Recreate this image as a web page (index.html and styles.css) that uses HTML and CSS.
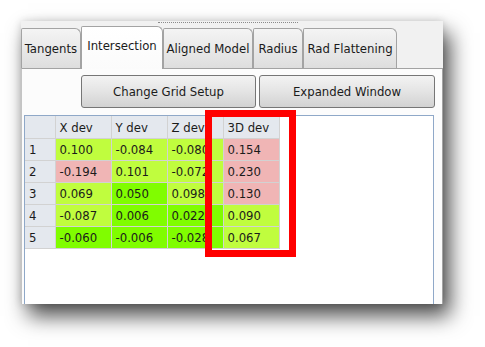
FILE: index.html
```html
<!DOCTYPE html>
<html lang="en">
<head>
  <meta charset="UTF-8">
  <title>Intersection deviations</title>
  <link rel="stylesheet" href="styles.css">
</head>
<body>
  <div class="window">
    <div class="topstrip"><div class="dots"></div></div>

    <div class="tabs">
      <div class="tab w-tangents">Tangents</div>
      <div class="tab w-intersection active">Intersection</div>
      <div class="tab w-aligned">Aligned Model</div>
      <div class="tab w-radius">Radius</div>
      <div class="tab w-flat">Rad Flattening</div>
    </div>

    <div class="pane">
      <div class="buttons">
        <button class="btn">Change Grid Setup</button>
        <button class="btn">Expanded Window</button>
      </div>

      <div class="grid-box">
        <table class="grid">
          <colgroup>
            <col class="c-head">
            <col class="c-data"><col class="c-data"><col class="c-data"><col class="c-data">
          </colgroup>
          <thead>
            <tr><th></th><th>X dev</th><th>Y dev</th><th>Z dev</th><th>3D dev</th></tr>
          </thead>
          <tbody>
            <tr><th>1</th><td class="lime">0.100</td><td class="lime">-0.084</td><td class="lime">-0.080</td><td class="pink">0.154</td></tr>
            <tr><th>2</th><td class="pink">-0.194</td><td class="lime">0.101</td><td class="lime">-0.072</td><td class="pink">0.230</td></tr>
            <tr><th>3</th><td class="lime">0.069</td><td class="green">0.050</td><td class="lime">0.098</td><td class="pink">0.130</td></tr>
            <tr><th>4</th><td class="lime">-0.087</td><td class="green">0.006</td><td class="green">0.022</td><td class="lime">0.090</td></tr>
            <tr><th>5</th><td class="green">-0.060</td><td class="green">-0.006</td><td class="green">-0.028</td><td class="lime">0.067</td></tr>
          </tbody>
        </table>
      </div>

      <div class="highlight"></div>
    </div>
  </div>
</body>
</html>
```

FILE: styles.css
```css
html, body {
  margin: 0;
  background: #ffffff;
}

body {
  box-sizing: border-box;
  min-height: 347px;
  padding: 21px 0 0 21px;
  font-family: "DejaVu Sans Condensed", "Liberation Sans", Arial, sans-serif;
  font-size: 13px;
  color: #1b1b1b;
}

.window {
  width: 422px;
  height: 283px;
  background: #f1f1f1;
  overflow: hidden;
  box-shadow: 7px 12px 20px rgba(0, 0, 0, 0.7), 0 0 8px rgba(0, 0, 0, 0.15);
  display: flex;
  flex-direction: column;
}

.topstrip {
  height: 5px;
  flex: none;
}

.dots {
  margin: 1px 0 0 137px;
  width: 140px;
  border-top: 1px dotted #8a8a8a;
}

/* tab strip */
.tabs {
  display: flex;
  align-items: flex-end;
  height: 42px;
  flex: none;
  position: relative;
  z-index: 1;
}

.tab {
  box-sizing: border-box;
  height: 40px;
  border: 1px solid #a3a3a3;
  border-bottom: none;
  border-radius: 2px 6px 0 0;
  background: linear-gradient(#f4f4f4, #dedede);
  display: flex;
  align-items: center;
  justify-content: center;
  padding-bottom: 1px;
  white-space: nowrap;
}

.tab.active {
  height: 43px;
  margin-bottom: -1px;
  background: linear-gradient(#ffffff, #fbfbfb);
  padding-bottom: 6px;
}

.w-tangents { width: 60px; }
.w-intersection { width: 82px; }
.w-aligned { width: 90px; }
.w-radius { width: 50px; }
.w-flat { width: 94px; }

/* page under the tabs */
.pane {
  flex: 1;
  position: relative;
  width: 420px;
  border: 1px solid #a3a3a3;
  border-bottom: none;
  border-left-color: #c4c4c4;
  background: #fcfcfc;
  display: flex;
  flex-direction: column;
}

.buttons {
  display: flex;
  justify-content: flex-end;
  gap: 3px;
  padding: 6px 7px 0 0;
}

.btn {
  box-sizing: border-box;
  height: 33px;
  width: 175px;
  border: 1px solid #767676;
  border-radius: 3px;
  background: linear-gradient(#f3f3f3, #e4e4e4 50%, #d2d2d2);
  font-family: inherit;
  font-size: 13px;
  color: #1b1b1b;
  padding: 0;
}

.btn + .btn {
  width: 176px;
}

.grid-box {
  flex: 1;
  margin: 7px 8px 0 2px;
  border: 1px solid #8fa8c8;
  border-bottom: none;
  background: #ffffff;
}

.grid {
  border-collapse: collapse;
  table-layout: fixed;
  width: 254px;
}

.c-head { width: 30px; }
.c-data { width: 56px; }

.grid th,
.grid td {
  height: 21px;
  padding: 0 0 0 4px;
  border: 1px solid #d2d2d2;
  text-align: left;
  font-weight: normal;
  white-space: nowrap;
  overflow: hidden;
}

.grid thead th {
  height: 22px;
  border-top: none;
}

.grid th {
  background: #e4e8ee;
}

.grid tr > :first-child {
  border-left: none;
}

.lime { background: #c0fd3e; }
.green { background: #80fd00; }
.pink { background: #f0b5b5; }

/* red marker drawn over the 3D dev column */
.highlight {
  position: absolute;
  left: 183px;
  top: 41px;
  width: 91px;
  height: 147px;
  box-sizing: border-box;
  border: 7px solid #ff0000;
}
```
